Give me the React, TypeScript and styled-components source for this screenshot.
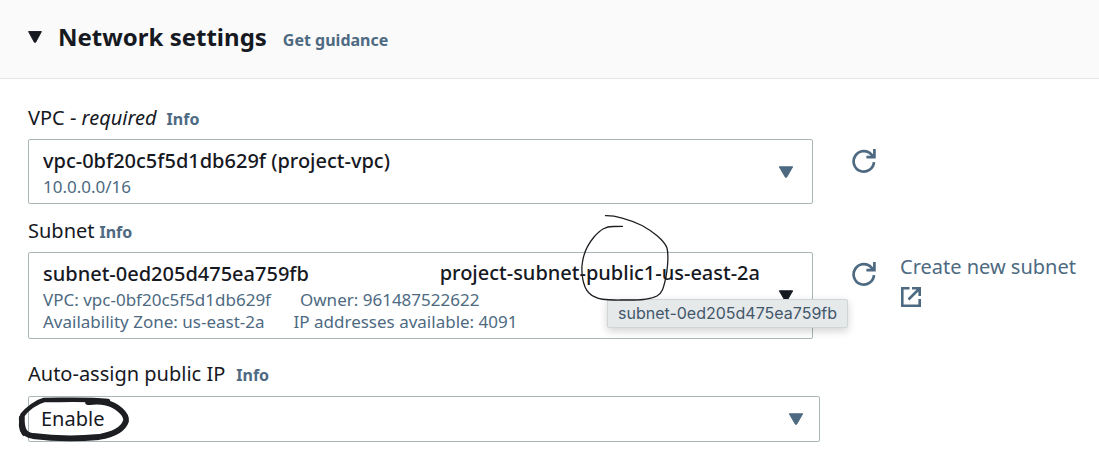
import React from "react";
import styled, { createGlobalStyle } from "styled-components";

const ink = "#16191f";
const pen = "#1c1e22";
const blue = "#4d6a82";
const line = "#aab7b8";

const GlobalStyle = createGlobalStyle`
  *, *::before, *::after { box-sizing: border-box; }
  body {
    margin: 0;
    background: #fff;
    color: ${ink};
    font-family: "Noto Sans", "Open Sans", sans-serif;
    font-size: 20px;
    line-height: 24px;
  }
`;

const Header = styled.header`
  display: flex;
  align-items: center;
  gap: 16px;
  height: 79px;
  padding: 0 28px 4px;
  background: #fafafa;
  border-bottom: 1px solid #e3e6e6;
`;

const ToggleButton = styled.button`
  display: flex;
  align-items: center;
  gap: 16px;
  padding: 0;
  border: 0;
  background: none;
  color: inherit;
  font: inherit;
  cursor: pointer;
`;

const Title = styled.h2`
  margin: 0;
  font-size: 24px;
  line-height: 32px;
  font-weight: 700;
`;

const InfoLink = styled.a`
  color: ${blue};
  font-size: 16px;
  font-weight: 700;
  text-decoration: none;
`;

const GuidanceLink = styled(InfoLink)`
  padding-top: 6px;
`;

const Form = styled.form`
  display: flex;
  flex-direction: column;
  gap: 15px;
  padding: 27px 28px 10px;
`;

const Field = styled.div<{ $spaced?: boolean }>`
  display: flex;
  flex-direction: column;
  gap: ${(p) => (p.$spaced ? 10 : 9)}px;
  margin-top: ${(p) => (p.$spaced ? 8 : 0)}px;
`;

const LabelRow = styled.div<{ $gap: number }>`
  display: flex;
  align-items: baseline;
  gap: ${(p) => p.$gap}px;
  height: 24px;
`;

const ControlRow = styled.div`
  display: grid;
  grid-template-columns: minmax(0, 1fr) 24px 156px;
  column-gap: 39px;
`;

const SideLinkCell = styled.div`
  margin-left: -15px;
`;

const SelectBox = styled.div<{ $narrow?: boolean }>`
  position: relative;
  display: grid;
  align-items: center;
  margin-right: ${(p) => (p.$narrow ? 251 : 0)}px;
`;

const Select = styled.select<{ $size: "plain" | "two" | "three" }>`
  grid-area: 1 / 1;
  width: 100%;
  height: ${(p) => ({ plain: 46, two: 65, three: 87 })[p.$size]}px;
  padding: ${(p) =>
    ({ plain: "0 48px 0 12px", two: "0 48px 22px 14px", three: "0 48px 44px 14px" })[p.$size]};
  appearance: none;
  border: 1px solid ${line};
  border-radius: 2px;
  background: #fff;
  color: ${ink};
  font: inherit;
  font-weight: ${(p) => (p.$size === "plain" ? 400 : 500)};
`;

const Details = styled.div`
  grid-area: 1 / 1;
  align-self: end;
  display: flex;
  flex-direction: column;
  padding: 0 15px 6px;
  color: ${blue};
  font-size: 17px;
  line-height: 22px;
  pointer-events: none;
`;

const DetailLine = styled.div`
  display: flex;
  gap: 29px;
  white-space: nowrap;
`;

const SelectedName = styled.span`
  grid-area: 1 / 1;
  place-self: start end;
  padding: 9px 53px 0 0;
  font-weight: 500;
  pointer-events: none;
`;

const Caret = styled.svg<{ $inset: number }>`
  grid-area: 1 / 1;
  justify-self: end;
  margin-right: ${(p) => p.$inset}px;
  pointer-events: none;
`;

const IconButton = styled.button`
  align-self: start;
  display: flex;
  margin-top: 9px;
  padding: 0;
  border: 0;
  background: none;
  cursor: pointer;
`;

const CreateLink = styled.a`
  display: flex;
  flex-direction: column;
  gap: 7px;
  padding-top: 3px;
  color: ${blue};
  text-decoration: none;
  white-space: nowrap;
`;

const Tooltip = styled.div`
  position: absolute;
  z-index: 1;
  top: 47px;
  right: -35px;
  width: 241px;
  border: 1px solid #d0d5d6;
  border-radius: 2px;
  background: #e6e9ea;
  box-shadow: 0 3px 8px rgba(0, 0, 0, 0.18);
  color: #42576a;
  font-family: Inter, sans-serif;
  font-size: 16px;
  line-height: 27px;
  text-align: center;
`;

const PenCircle = styled.svg`
  position: absolute;
  z-index: 2;
  top: -42px;
  right: 139px;
  pointer-events: none;
`;

const MarkerCircle = styled.svg`
  position: absolute;
  z-index: 2;
  top: -1px;
  left: -12px;
  pointer-events: none;
`;

const Triangle = ({ inset, dark }: { inset: number; dark?: boolean }) => (
  <Caret $inset={inset} width="16" height="12" viewBox="0 0 16 12" aria-hidden="true">
    <path d="M1.3 0.8h13.4L8.6 11.3H7.4Z" fill={dark ? ink : blue} stroke={dark ? ink : blue} strokeLinejoin="round" />
  </Caret>
);

const Refresh = ({ label }: { label: string }) => (
  <IconButton type="button" aria-label={label}>
    <svg width="24" height="26" viewBox="0 0 24 26" fill="none" stroke={blue} strokeWidth="2.7">
      <path d="M22 14.2A10.2 10.2 0 1 1 19.6 6.8L21.8 8.8" />
      <path d="M22.4 1v8.2H14.4" />
    </svg>
  </IconButton>
);

export default function App() {
  return (
    <main>
      <GlobalStyle />
      <Header>
        <ToggleButton type="button" aria-expanded="true">
          <svg width="14" height="12" viewBox="0 0 14 12" aria-hidden="true">
            <path d="M.6.6h12.8L7.6 11.3H6.4Z" fill={ink} stroke={ink} strokeLinejoin="round" />
          </svg>
          <Title>Network settings</Title>
        </ToggleButton>
        <GuidanceLink href="#guidance">Get guidance</GuidanceLink>
      </Header>

      <Form>
        <Field>
          <LabelRow $gap={10}>
            <label htmlFor="vpc">
              VPC - <em>required</em>
            </label>
            <InfoLink href="#vpc-info">Info</InfoLink>
          </LabelRow>
          <ControlRow>
            <SelectBox>
              <Select id="vpc" $size="two">
                <option>vpc-0bf20c5f5d1db629f (project-vpc)</option>
              </Select>
              <Details>10.0.0.0/16</Details>
              <Triangle inset={19} />
            </SelectBox>
            <Refresh label="Refresh VPCs" />
          </ControlRow>
        </Field>

        <Field>
          <LabelRow $gap={5}>
            <label htmlFor="subnet">Subnet</label>
            <InfoLink href="#subnet-info">Info</InfoLink>
          </LabelRow>
          <ControlRow>
            <SelectBox>
              <Select id="subnet" $size="three">
                <option>subnet-0ed205d475ea759fb</option>
              </Select>
              <SelectedName>project-subnet-public1-us-east-2a</SelectedName>
              <Details>
                <DetailLine>
                  <span>VPC: vpc-0bf20c5f5d1db629f</span>
                  <span>Owner: 961487522622</span>
                </DetailLine>
                <DetailLine>
                  <span>Availability Zone: us-east-2a</span>
                  <span>IP addresses available: 4091</span>
                </DetailLine>
              </Details>
              <Triangle inset={19} dark />
              <Tooltip role="tooltip">subnet-0ed205d475ea759fb</Tooltip>
              <PenCircle width="96" height="96" viewBox="578 210 96 96" fill="none" stroke={pen} strokeWidth="1.3" strokeLinecap="round">
                <path d="M605.5 215.7C616 215.4 632 221 642 225.5C652 231 664 240 667 248C669 257 667.5 268 666 277C664 285 663 293 657 296C648 300.5 636 300 625 300C610 300 597 301 589 293C582 286 581 270 582.5 262C584 251 589 243 594 237C601 229 606 226.5 613 226.5L622.5 226.3" />
              </PenCircle>
            </SelectBox>
            <Refresh label="Refresh subnets" />
            <SideLinkCell>
              <CreateLink href="#create-subnet">
                Create new subnet
                <svg width="22" height="22" viewBox="0 0 22 22" fill="none" stroke={blue} strokeWidth="2.6" aria-hidden="true">
                  <path d="M9.5 2.3H2.3v17.4h17.4V13" />
                  <path d="M12 2.3h7.7V10M19.5 2.5L8.5 13.5" />
                </svg>
              </CreateLink>
            </SideLinkCell>
          </ControlRow>
        </Field>

        <Field $spaced>
          <LabelRow $gap={11}>
            <label htmlFor="public-ip">Auto-assign public IP</label>
            <InfoLink href="#public-ip-info">Info</InfoLink>
          </LabelRow>
          <SelectBox $narrow>
            <Select id="public-ip" $size="plain">
              <option>Enable</option>
              <option>Disable</option>
            </Select>
            <Triangle inset={16} />
            <MarkerCircle width="116" height="52" viewBox="16 395 116 52" fill="none" stroke={pen} strokeLinecap="round" strokeLinejoin="round">
              <path d="M108 401C88 399 64 400 44 400C36 402 27 409 22.5 415C20.5 422 20.5 429 24 433.5" strokeWidth="4.6" />
              <path d="M21.8 418C21.5 431 25 434.5 33 436C52 438.5 78 439 99 437C111 435 123 430 126 421C127 414 117 405 105 402.5C99 401 94 402 88 402" strokeWidth="5.8" />
            </MarkerCircle>
          </SelectBox>
        </Field>
      </Form>
    </main>
  );
}
